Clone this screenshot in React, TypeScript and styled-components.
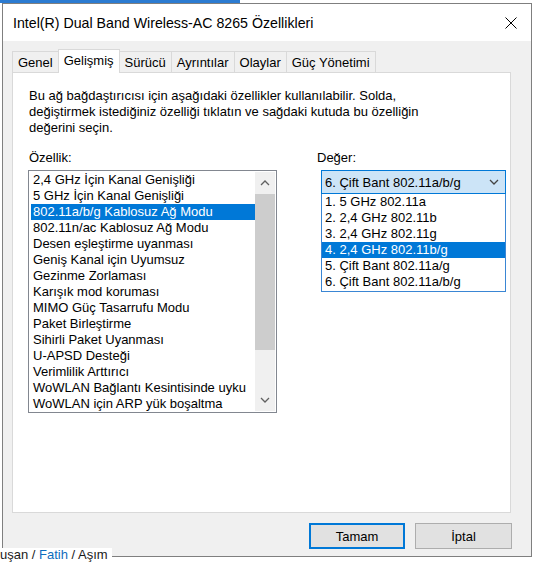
import React from 'react'
import styled, { createGlobalStyle } from 'styled-components'

const GlobalStyle = createGlobalStyle`
  html, body {
    margin: 0;
    padding: 0;
    background: #fff;
  }
  body {
    font-family: 'Liberation Sans', Arial, sans-serif;
    font-size: 13px;
    color: #000;
  }
`

const properties = [
  '2,4 GHz İçin Kanal Genişliği',
  '5 GHz İçin Kanal Genişliği',
  '802.11a/b/g Kablosuz Ağ Modu',
  '802.11n/ac Kablosuz Ağ Modu',
  'Desen eşleştirme uyanması',
  'Geniş Kanal için Uyumsuz',
  'Gezinme Zorlaması',
  'Karışık mod koruması',
  'MIMO Güç Tasarrufu Modu',
  'Paket Birleştirme',
  'Sihirli Paket Uyanması',
  'U-APSD Desteği',
  'Verimlilik Arttırıcı',
  'WoWLAN Bağlantı Kesintisinde uyku',
  'WoWLAN için ARP yük boşaltma',
]

const values = [
  '1. 5 GHz 802.11a',
  '2. 2,4 GHz 802.11b',
  '3. 2,4 GHz 802.11g',
  '4. 2,4 GHz 802.11b/g',
  '5. Çift Bant 802.11a/g',
  '6. Çift Bant 802.11a/b/g',
]

const tabs = ['Genel', 'Gelişmiş', 'Sürücü', 'Ayrıntılar', 'Olaylar', 'Güç Yönetimi']

const Desktop = styled.div`
  position: relative;
  width: 534px;
  height: 562px;
  overflow: hidden;
  background: #fff;
`

const TaskStrip = styled.div`
  position: absolute;
  left: 0;
  top: 0;
  width: 240px;
  height: 3px;
  background: #2b7bd1;
`

const BehindText = styled.div`
  position: absolute;
  left: 0;
  top: 548px;
  padding-right: 4px;
  background: #fff;
  font-size: 13px;
  line-height: 14px;
  color: #1a1a1a;
  white-space: nowrap;

  > span {
    color: #0f6cbd;
  }
`

const Window = styled.div`
  position: absolute;
  left: 2px;
  top: 3px;
  width: 530px;
  height: 554px;
  box-sizing: border-box;
  border: 1px solid #7f7f7f;
  background: #f0f0f0;
  display: flex;
  flex-direction: column;
`

const TitleBar = styled.div`
  height: 37px;
  flex: none;
  background: #fff;
  display: flex;
  align-items: center;
  justify-content: space-between;
  padding: 0 14px 0 10px;
  font-size: 14.2px;
`

const Body = styled.div`
  flex: 1;
  display: flex;
  flex-direction: column;
  padding: 8px 20px 0 9px;
`

const TabRow = styled.div`
  display: flex;
  align-items: flex-end;
  height: 23px;
  position: relative;
  z-index: 1;
`

const Tab = styled.div<{ active?: boolean }>`
  box-sizing: border-box;
  border: 1px solid #d9d9d9;
  border-bottom: none;
  margin-left: -1px;
  padding: 0 5px;
  display: flex;
  align-items: center;
  height: ${(p) => (p.active ? 24 : 21)}px;
  margin-bottom: ${(p) => (p.active ? -1 : 0)}px;
  padding-bottom: ${(p) => (p.active ? 3 : 0)}px;
  background: ${(p) => (p.active ? '#fff' : '#f0f0f0')};
  &:first-child {
    margin-left: 0;
  }
`

const Panel = styled.div`
  box-sizing: border-box;
  height: 441px;
  border: 1px solid #d9d9d9;
  background: #fff;
  padding: 15px 0 0 15px;
`

const Description = styled.p`
  margin: 0 0 0 1px;
  line-height: 16px;
`

const Columns = styled.div`
  display: grid;
  grid-template-columns: 249px 185px;
  column-gap: 40px;
  margin-top: 14px;
`

const Label = styled.div<{ indent: number }>`
  line-height: 16px;
  margin-left: ${(p) => p.indent}px;
  margin-bottom: 4px;
`

const ListBox = styled.div`
  box-sizing: border-box;
  width: 249px;
  height: 243px;
  border: 1px solid #828790;
  padding: 1px;
  display: flex;
`

const Items = styled.div`
  flex: 1;
  padding-left: 1px;
`

const Item = styled.div<{ selected?: boolean }>`
  height: 16px;
  line-height: 16px;
  padding-left: 2px;
  white-space: nowrap;
  overflow: hidden;
  background: ${(p) => (p.selected ? '#0078d7' : 'transparent')};
  color: ${(p) => (p.selected ? '#fff' : '#000')};
`

const ScrollBar = styled.div`
  width: 20px;
  background: #f0f0f0;
  display: flex;
  flex-direction: column;
`

const ScrollArrow = styled.div`
  height: 22px;
  display: flex;
  align-items: center;
  justify-content: center;
`

const Thumb = styled.div`
  height: 156px;
  background: #cdcdcd;
`

const Track = styled.div`
  flex: 1;
`

const ValueColumn = styled.div`
  position: relative;
`

const Combo = styled.div`
  box-sizing: border-box;
  margin-left: 4px;
  width: 185px;
  height: 24px;
  border: 1px solid #0078d7;
  background: #cce4f7;
  display: flex;
  align-items: center;
  justify-content: space-between;
  padding: 0 6px 0 3px;
`

const DropList = styled.div`
  position: absolute;
  left: 4px;
  top: 44px;
  box-sizing: border-box;
  width: 185px;
  height: 98px;
  border: 1px solid #3a86d4;
  border-top: none;
  background: #fff;
`

const DropItem = styled.div<{ selected?: boolean }>`
  height: 16px;
  line-height: 16px;
  padding-left: 3px;
  background: ${(p) => (p.selected ? '#0078d7' : '#fff')};
  color: ${(p) => (p.selected ? '#fff' : '#000')};
`

const ButtonRow = styled.div`
  display: flex;
  justify-content: flex-end;
  gap: 10px;
  margin: 10px -1px 0 0;
`

const Button = styled.div<{ primary?: boolean }>`
  box-sizing: border-box;
  width: ${(p) => (p.primary ? 96 : 97)}px;
  height: 26px;
  background: #e1e1e1;
  border: ${(p) => (p.primary ? '2px solid #0078d7' : '1px solid #adadad')};
  display: flex;
  align-items: center;
  justify-content: center;
`

const Chevron = ({ up, color }: { up?: boolean; color: string }) => (
  <svg width="10" height="6" viewBox="0 0 10 6">
    <polyline
      points={up ? '1,5 5,1 9,5' : '1,1 5,5 9,1'}
      fill="none"
      stroke={color}
      strokeWidth="1.3"
    />
  </svg>
)

const CloseIcon = () => (
  <svg width="12" height="12" viewBox="0 0 12 12">
    <path d="M0.5 0.5 L11.5 11.5 M11.5 0.5 L0.5 11.5" stroke="#000" strokeWidth="1" />
  </svg>
)

export default function App() {
  return (
    <Desktop>
      <GlobalStyle />
      <TaskStrip />
      <Window>
        <TitleBar>
          <span>Intel(R) Dual Band Wireless-AC 8265 Özellikleri</span>
          <CloseIcon />
        </TitleBar>
        <Body>
          <TabRow>
            {tabs.map((t) => (
              <Tab key={t} active={t === 'Gelişmiş'}>
                {t}
              </Tab>
            ))}
          </TabRow>
          <Panel>
            <Description>
              Bu ağ bağdaştırıcısı için aşağıdaki özellikler kullanılabilir. Solda,
              <br />
              değiştirmek istediğiniz özelliği tıklatın ve sağdaki kutuda bu özelliğin
              <br />
              değerini seçin.
            </Description>
            <Columns>
              <div>
                <Label indent={1}>Özellik:</Label>
                <ListBox>
                  <Items>
                    {properties.map((p, i) => (
                      <Item key={p} selected={i === 2}>
                        {p}
                      </Item>
                    ))}
                  </Items>
                  <ScrollBar>
                    <ScrollArrow>
                      <Chevron up color="#606060" />
                    </ScrollArrow>
                    <Thumb />
                    <Track />
                    <ScrollArrow>
                      <Chevron color="#606060" />
                    </ScrollArrow>
                  </ScrollBar>
                </ListBox>
              </div>
              <ValueColumn>
                <Label indent={0}>Değer:</Label>
                <Combo>
                  <span>6. Çift Bant 802.11a/b/g</span>
                  <Chevron color="#444" />
                </Combo>
                <DropList>
                  {values.map((v, i) => (
                    <DropItem key={v} selected={i === 3}>
                      {v}
                    </DropItem>
                  ))}
                </DropList>
              </ValueColumn>
            </Columns>
          </Panel>
          <ButtonRow>
            <Button primary>Tamam</Button>
            <Button>İptal</Button>
          </ButtonRow>
        </Body>
      </Window>
      <BehindText>
        uşan / <span>Fatih</span> / Aşım
      </BehindText>
    </Desktop>
  )
}
